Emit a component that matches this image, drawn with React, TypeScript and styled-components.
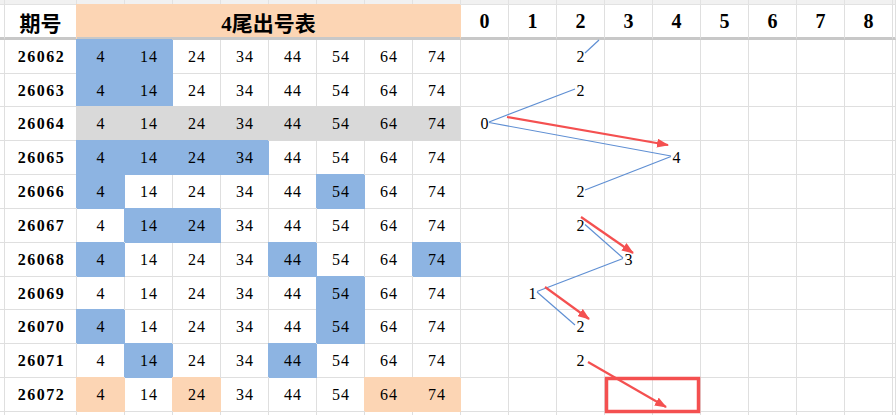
import React from "react";
import styled, { createGlobalStyle } from "styled-components";

const GRID = "#dfdfdf";
const BLUE = "#8db4e2";
const GREY = "#d9d9d9";
const PEACH = "#fcd5b4";
const RED = "#f45050";
const LINE = "#5f8fd3";
const COLS = "5px 72px repeat(17, 48px) 1fr";

type Tone = "blue" | "grey" | "peach";

interface Draw {
  id: string;
  h: number;
  tone: Tone;
  marked: number[];
  trend?: number;
}

const nums = [4, 14, 24, 34, 44, 54, 64, 74];

const draws: Draw[] = [
  { id: "26062", h: 34, tone: "blue", marked: [0, 1], trend: 2 },
  { id: "26063", h: 33, tone: "blue", marked: [0, 1], trend: 2 },
  { id: "26064", h: 34, tone: "grey", marked: [0, 1, 2, 3, 4, 5, 6, 7], trend: 0 },
  { id: "26065", h: 34, tone: "blue", marked: [0, 1, 2, 3], trend: 4 },
  { id: "26066", h: 34, tone: "blue", marked: [0, 5], trend: 2 },
  { id: "26067", h: 34, tone: "blue", marked: [1, 2], trend: 2 },
  { id: "26068", h: 34, tone: "blue", marked: [0, 4, 7], trend: 3 },
  { id: "26069", h: 33, tone: "blue", marked: [5], trend: 1 },
  { id: "26070", h: 34, tone: "blue", marked: [0, 5], trend: 2 },
  { id: "26071", h: 34, tone: "blue", marked: [1, 4], trend: 2 },
  { id: "26072", h: 34, tone: "peach", marked: [0, 2, 6, 7] },
];

const toneColor: Record<Tone, string> = { blue: BLUE, grey: GREY, peach: PEACH };

// red annotation arrows, measured off the sheet
const arrows = [
  [507, 117, 668, 145],
  [581, 217, 633, 253],
  [545, 287, 589, 319],
  [588, 362, 666, 407],
];

const GlobalStyle = createGlobalStyle`
  html, body {
    margin: 0;
    padding: 0;
    background: #fff;
    overflow: hidden;
  }
  body {
    font-family: "Liberation Serif", "Noto Sans CJK SC", serif;
    color: #000;
  }
`;

const Sheet = styled.div`
  position: relative;
  width: 896px;
  height: 415px;
  overflow: hidden;
  background: #fff;
`;

const Row = styled.div<{ $h: number }>`
  display: grid;
  grid-template-columns: ${COLS};
  height: ${p => p.$h}px;
`;

const Cell = styled.div<{ $fill?: string; $thick?: boolean; $span?: number }>`
  box-sizing: border-box;
  display: flex;
  align-items: center;
  justify-content: center;
  min-width: 0;
  grid-column: ${p => (p.$span ? `span ${p.$span}` : "auto")};
  background: ${p => p.$fill || "transparent"};
  border-right: 1px solid ${p => p.$fill || GRID};
  border-bottom: ${p => (p.$thick ? "3px solid #c8c8c8" : `1px solid ${p.$fill || GRID}`)};
  box-shadow: ${p => (p.$fill ? `-1px -1px 0 0 ${p.$fill}` : "none")};
`;

const StripCell = styled(Cell)`
  background: #f1f1f1;
  border-right-color: #e2e2e2;
  border-bottom-color: #e2e2e2;
`;

const TitleCell = styled(Cell)`
  font-family: "Liberation Serif", "Noto Sans CJK SC", serif;
  font-weight: 700;
  font-size: 21px;
  padding-top: 1px;
`;

const ColHead = styled(Cell)`
  font-weight: 700;
  font-size: 20px;
`;

const Period = styled(Cell)`
  font-weight: 700;
  font-size: 16px;
  letter-spacing: 1.5px;
  padding-left: 2px;
  padding-top: 1px;
`;

const Num = styled(Cell)`
  font-size: 16px;
  letter-spacing: 1px;
  padding-left: 1px;
  padding-top: 1px;
`;

const Overlay = styled.svg`
  position: absolute;
  left: 0;
  top: 0;
  pointer-events: none;
`;

const tops: number[] = [];
draws.reduce((y, d) => {
  tops.push(y);
  return y + d.h;
}, 40);

const cx = (v: number) => 484 + 48 * v;
const cy = (i: number) => tops[i] + (draws[i].h - 1) / 2;

const TrendLines: React.FC = () => {
  const segs: number[][] = [];
  for (let i = 0; i < draws.length - 1; i++) {
    const a = draws[i].trend;
    const b = draws[i + 1].trend;
    if (a === undefined || b === undefined || a === b) continue;
    const dir = Math.sign(b - a);
    segs.push([cx(a) + 5 * dir, cy(i) - 1, cx(b) - 5 * dir, cy(i + 1) - 1.5]);
  }

  return (
    <Overlay width={896} height={415} viewBox="0 0 896 415">
      <defs>
        <marker
          id="head"
          markerWidth="12"
          markerHeight="9"
          refX="11"
          refY="4.5"
          orient="auto"
          markerUnits="userSpaceOnUse"
        >
          <path d="M0,0 L12,4.5 L0,9 z" fill={RED} />
        </marker>
      </defs>
      <line x1={585} y1={53} x2={599} y2={40} stroke={LINE} strokeWidth={1.2} />
      {segs.map((s, i) => (
        <line key={i} x1={s[0]} y1={s[1]} x2={s[2]} y2={s[3]} stroke={LINE} strokeWidth={1.2} />
      ))}
      {arrows.map((a, i) => (
        <line
          key={i}
          x1={a[0]}
          y1={a[1]}
          x2={a[2]}
          y2={a[3]}
          stroke={RED}
          strokeWidth={2.2}
          markerEnd="url(#head)"
        />
      ))}
      <rect x={606.5} y={378.5} width={92} height={33} fill="none" stroke={RED} strokeWidth={3.5} />
    </Overlay>
  );
};

const App: React.FC = () => {
  const trendCols = Array.from({ length: 9 }, (_, i) => i);

  return (
    <>
      <GlobalStyle />
      <Sheet>
        <Row $h={5}>
          {Array.from({ length: 20 }, (_, i) => (
            <StripCell key={i} />
          ))}
        </Row>

        <Row $h={35}>
          <Cell $thick />
          <TitleCell $thick>期号</TitleCell>
          <TitleCell $thick $span={8} $fill={PEACH}>
            4尾出号表
          </TitleCell>
          {trendCols.map(n => (
            <ColHead key={n} $thick>
              {n}
            </ColHead>
          ))}
          <Cell $thick />
        </Row>

        {draws.map(d => (
          <Row key={d.id} $h={d.h}>
            <Cell />
            <Period>{d.id}</Period>
            {nums.map((n, k) => (
              <Num key={n} $fill={d.marked.includes(k) ? toneColor[d.tone] : undefined}>
                {n}
              </Num>
            ))}
            {trendCols.map(n => (
              <Num key={n}>{d.trend === n ? n : ""}</Num>
            ))}
            <Cell />
          </Row>
        ))}

        <Row $h={10}>
          {Array.from({ length: 20 }, (_, i) => (
            <Cell key={i} />
          ))}
        </Row>

        <TrendLines />
      </Sheet>
    </>
  );
};

export default App;
